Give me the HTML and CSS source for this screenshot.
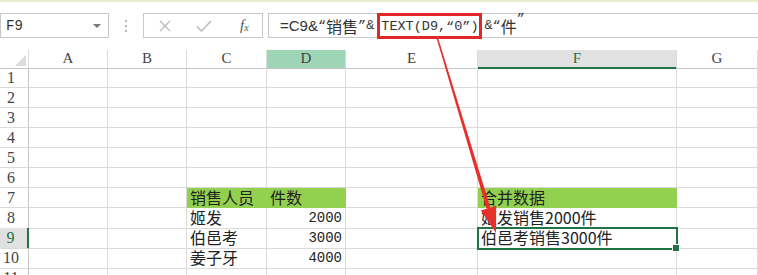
FILE: index.html
```html
<!DOCTYPE html>
<html lang="zh">
<head>
  <meta charset="UTF-8">
  <title>Excel TEXT</title>
  <link rel="stylesheet" href="styles.css">
</head>
<body>
  <div class="top-strip"></div>

  <div class="formula-bar">
    <div class="name-box">
      <span class="name">F9</span>
      <span class="caret"></span>
    </div>
    <div class="dots"><i></i><i></i><i></i></div>
    <div class="fx-buttons">
      <svg class="btn-x" width="12" height="12" viewBox="0 0 12 12"><path d="M1 1 L11 11 M11 1 L1 11" stroke="#bdbdbd" stroke-width="1.4" fill="none"/></svg>
      <svg class="btn-ok" width="16" height="12" viewBox="0 0 16 12"><path d="M1 6.5 L5.5 11 L15 1" stroke="#bdbdbd" stroke-width="1.6" fill="none"/></svg>
      <span class="fx">f<sub>x</sub></span>
    </div>
    <div class="formula">
      <span class="f-sans">=C9&amp;</span>“<span class="f-cjk">销售</span>”&amp;<span class="mark">TEXT(D9,“0”)</span>&amp;“<span class="f-cjk">件</span>”
    </div>
  </div>

  <div class="sheet">
    <div class="row head">
      <div class="corner"><span class="tri"></span></div>
      <div>A</div><div>B</div><div>C</div><div class="col-sel">D</div><div>E</div><div class="col-active">F</div><div>G</div>
    </div>
    <div class="row"><div class="rh">1</div><div></div><div></div><div></div><div></div><div></div><div></div><div></div></div>
    <div class="row"><div class="rh">2</div><div></div><div></div><div></div><div></div><div></div><div></div><div></div></div>
    <div class="row"><div class="rh">3</div><div></div><div></div><div></div><div></div><div></div><div></div><div></div></div>
    <div class="row"><div class="rh">4</div><div></div><div></div><div></div><div></div><div></div><div></div><div></div></div>
    <div class="row"><div class="rh">5</div><div></div><div></div><div></div><div></div><div></div><div></div><div></div></div>
    <div class="row"><div class="rh">6</div><div></div><div></div><div></div><div></div><div></div><div></div><div></div></div>
    <div class="row"><div class="rh">7</div><div></div><div></div><div class="txt fill">销售人员</div><div class="txt fill">件数</div><div></div><div class="txt fill">合并数据</div><div></div></div>
    <div class="row"><div class="rh">8</div><div></div><div></div><div class="txt">姬发</div><div class="num">2000</div><div></div><div class="txt">姬发销售2000件</div><div></div></div>
    <div class="row"><div class="rh rh-active">9</div><div></div><div></div><div class="txt">伯邑考</div><div class="num">3000</div><div></div><div class="txt selected">伯邑考销售3000件<span class="handle"></span></div><div></div></div>
    <div class="row"><div class="rh">10</div><div></div><div></div><div class="txt">姜子牙</div><div class="num">4000</div><div></div><div></div><div></div></div>
    <div class="row"><div class="rh">11</div><div></div><div></div><div></div><div></div><div></div><div></div><div></div></div>
  </div>

  <svg class="arrow" width="758" height="275" viewBox="0 0 758 275">
    <polygon points="437.7,36.8 436.3,37.2 486.6,208.7 490.4,207.5" fill="#e8302a"/>
    <polygon points="496,233 496.2,205.8 480.8,210.4" fill="#e8302a"/>
  </svg>
</body>
</html>
```

FILE: styles.css
```css
html, body {
  margin: 0;
  padding: 0;
}
body {
  width: 758px;
  height: 275px;
  overflow: hidden;
  background: #ffffff;
  position: relative;
  font-family: "Noto Sans CJK SC", sans-serif;
  color: #222;
}
.top-strip {
  height: 2px;
  background: #e6edcf;
}

/* formula bar */
.formula-bar {
  display: flex;
  margin-top: 11px;
  height: 25px;
}
.name-box {
  width: 109px;
  box-sizing: border-box;
  border: 1px solid #c8c8c8;
  display: flex;
  align-items: center;
  justify-content: space-between;
  padding: 0 7px 0 5px;
}
.name {
  font-family: "Liberation Mono", monospace;
  font-size: 14px;
  color: #333;
}
.caret {
  width: 0;
  height: 0;
  border-left: 4px solid transparent;
  border-right: 4px solid transparent;
  border-top: 4px solid #777;
}
.dots {
  width: 34px;
  display: flex;
  flex-direction: column;
  align-items: center;
  justify-content: center;
  gap: 3px;
}
.dots i {
  width: 2px;
  height: 2px;
  background: #b5b5b5;
}
.fx-buttons {
  width: 120px;
  box-sizing: border-box;
  border: 1px solid #c8c8c8;
  display: flex;
  align-items: center;
  padding-left: 14px;
}
.btn-x {
  margin-left: 1px;
}
.btn-ok {
  margin-left: 25px;
}
.fx {
  margin-left: 28px;
  font-family: "Liberation Serif", serif;
  font-style: italic;
  font-size: 15px;
  color: #555;
  line-height: 1;
}
.fx sub {
  font-size: 10px;
  vertical-align: -1px;
}
.formula {
  flex: 1;
  margin-left: 5px;
  box-sizing: border-box;
  border: 1px solid #c8c8c8;
  border-right: none;
  display: flex;
  align-items: center;
  padding-left: 11px;
  font-family: "Liberation Mono", "Noto Sans CJK SC", monospace;
  font-size: 13.5px;
  color: #333;
  white-space: pre;
}
.f-sans {
  font-family: "Liberation Sans", sans-serif;
  font-size: 15px;
}
.f-cjk {
  font-family: "Noto Sans CJK SC", sans-serif;
  font-size: 16px;
}
.mark {
  border: 3px solid #e3262a;
  margin: -3px 3px -3px 3px;
  padding: 1px 0 0 1px;
  height: 19px;
  display: inline-flex;
  align-items: center;
}

/* sheet grid */
.sheet {
  margin-top: 12px;
}
.row {
  display: grid;
  grid-template-columns: 29px 79px 79px 80px 79px 132px 199px 81px;
  height: 20px;
}
.row > div {
  box-sizing: border-box;
  border-right: 1px solid #dadada;
  border-bottom: 1px solid #dadada;
  position: relative;
}
.head {
  height: 18px;
}
.head > div {
  font-family: "Liberation Serif", serif;
  font-size: 15px;
  line-height: 17px;
  text-align: center;
  color: #444;
  border-bottom-color: #c6c6c6;
}
.corner .tri {
  position: absolute;
  right: 2px;
  bottom: 2px;
  width: 0;
  height: 0;
  border-left: 11px solid transparent;
  border-bottom: 11px solid #dcdcdc;
}
.head .col-sel {
  background: #9fd5b7;
}
.head .col-active {
  background: #e1e1e1;
  color: #217346;
  border-bottom: 2px solid #217346;
}
.rh {
  font-family: "Liberation Serif", serif;
  font-size: 16px;
  line-height: 19px;
  text-align: center;
  padding-right: 6px;
  color: #444;
}
.row > .rh {
  border-right-color: #c6c6c6;
}
.row > .rh-active {
  background: #e1e1e1;
  color: #217346;
  border-right: 2px solid #217346;
}
.txt {
  font-size: 16px;
  line-height: 19px;
  padding-left: 3px;
  white-space: nowrap;
}
.num {
  font-family: "Liberation Mono", monospace;
  font-size: 14px;
  line-height: 20px;
  text-align: right;
  padding-right: 3px;
}
.row > .fill {
  background: #92d050;
  border-right-color: #92d050;
  border-bottom-color: #92d050;
}
.row > .selected {
  outline: 2px solid #217346;
  outline-offset: -1px;
  z-index: 1;
}
.handle {
  position: absolute;
  right: -4px;
  bottom: -4px;
  width: 6px;
  height: 6px;
  background: #217346;
  border: 1px solid #fff;
}

.arrow {
  position: absolute;
  left: 0;
  top: 0;
  pointer-events: none;
  z-index: 5;
}
```
